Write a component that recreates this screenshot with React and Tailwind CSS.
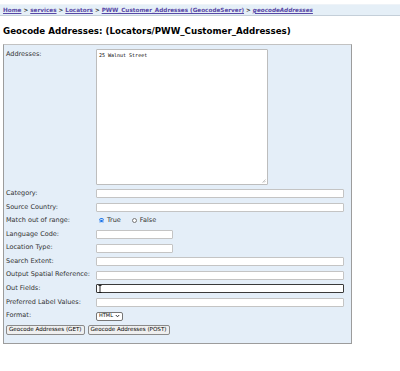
import React from "react";

const rows = [
  { label: "Category:", type: "long" },
  { label: "Source Country:", type: "long" },
  { label: "Match out of range:", type: "radio" },
  { label: "Language Code:", type: "short" },
  { label: "Location Type:", type: "short" },
  { label: "Search Extent:", type: "long" },
  { label: "Output Spatial Reference:", type: "long" },
  { label: "Out Fields:", type: "focus" },
  { label: "Preferred Label Values:", type: "long" },
  { label: "Format:", type: "select" },
];

function Field({ type }) {
  if (type === "long")
    return <div className="w-[248px] h-[9px] bg-white border border-[#c4c4c4] rounded-[1px]" />;
  if (type === "short")
    return <div className="w-[77px] h-[9px] bg-white border border-[#c4c4c4] rounded-[1px]" />;
  if (type === "focus")
    return (
      <div className="relative w-[248px] h-[9px] bg-white border border-[#3a3a3a] rounded-[1px]">
        {/* mouse I-beam over the field */}
        <svg className="absolute left-[1px] top-[0px]" width="4" height="8" viewBox="0 0 4 8">
          <path d="M0.5 0.5h3M2 0.5v7M0.5 7.5h3" stroke="#111" strokeWidth="0.9" fill="none" />
        </svg>
      </div>
    );
  if (type === "radio")
    return (
      <div className="flex items-center pl-[3px] text-[6.5px] text-[#333]">
        <span className="w-[5px] h-[5px] rounded-full bg-[#1a73e8] flex items-center justify-center">
          <span className="w-[2.4px] h-[2.4px] rounded-full bg-[#1a73e8] ring-[0.7px] ring-white" />
        </span>
        <span className="ml-[3px]">True</span>
        <span className="ml-[11px] w-[5px] h-[5px] rounded-full bg-white border-[0.8px] border-[#777]" />
        <span className="ml-[3px]">False</span>
      </div>
    );
  if (type === "select")
    return (
      <div className="w-[27px] h-[9px] bg-white border border-[#767676] rounded-[2px] flex items-center justify-between px-[2px] text-[5px] text-black">
        <span>HTML</span>
        <svg width="5" height="4" viewBox="0 0 5 4">
          <path d="M0.8 1l1.7 1.8L4.2 1" stroke="#222" strokeWidth="0.9" fill="none" />
        </svg>
      </div>
    );
  return null;
}

export default function App() {
  return (
    <div className="w-[400px] h-[371px] bg-white overflow-hidden font-['DejaVu_Sans',Verdana,sans-serif]">
      <div className="h-[4px]" />

      {/* breadcrumbs */}
      <div className="h-[12px] bg-[#e5eff7] border-t border-[#eef3f8] border-b border-b-[#c4cfd9] flex items-center pl-[3px] text-[5.7px] font-bold text-[#222] whitespace-nowrap">
        <a className="underline text-[#5747a6]">Home</a>
        <span className="mx-[2px]">&gt;</span>
        <a className="underline text-[#5747a6]">services</a>
        <span className="mx-[2px]">&gt;</span>
        <a className="underline text-[#5747a6]">Locators</a>
        <span className="mx-[2px]">&gt;</span>
        <a className="underline text-[#5747a6]">PWW_Customer_Addresses (GeocodeServer)</a>
        <span className="mx-[2px]">&gt;</span>
        <a className="underline italic text-[#5747a6]">geocodeAddresses</a>
      </div>

      <h2 className="mt-[10px] ml-[3px] text-[8.7px] leading-[11px] font-bold text-black whitespace-nowrap">
        Geocode Addresses: (Locators/PWW_Customer_Addresses)
      </h2>

      {/* form table */}
      <div className="mt-[7px] ml-[3px] w-[349px] bg-[#e4eef8] border border-[#9c9c9c] border-t-[#c2c2c2] pt-[4px] pb-[6px] pl-[2px] text-[6.5px] text-[#333]">
        <div className="flex">
          <div className="w-[90px] leading-[8px] pt-[1px]">Addresses:</div>
          <div className="w-[172px] h-[136px] bg-white border border-[#bdbdbd] rounded-[1px] relative">
            <div className="pl-[2px] pt-[2px] font-['DejaVu_Sans_Mono',monospace] text-[5px] text-black">
              25 Walnut Street
            </div>
            <svg className="absolute right-[1px] bottom-[1px]" width="4" height="4" viewBox="0 0 4 4">
              <path d="M0.5 3.5L3.5 0.5M2 3.5L3.5 2" stroke="#999" strokeWidth="0.6" />
            </svg>
          </div>
        </div>

        <div className="mt-[2px]">
          {rows.map((r) => (
            <div key={r.label} className="flex items-center h-[13.6px] whitespace-nowrap">
              <div className="w-[90px]">{r.label}</div>
              <Field type={r.type} />
            </div>
          ))}
          <div className="flex items-center h-[13.6px] gap-[3px] text-[5.6px] text-black whitespace-nowrap">
            <button className="h-[10px] px-[2px] bg-[#efefef] border border-[#8a8a8a] rounded-[2px] leading-none">
              Geocode Addresses (GET)
            </button>
            <button className="h-[10px] px-[2px] bg-[#efefef] border border-[#8a8a8a] rounded-[2px] leading-none">
              Geocode Addresses (POST)
            </button>
          </div>
        </div>
      </div>
    </div>
  );
}
